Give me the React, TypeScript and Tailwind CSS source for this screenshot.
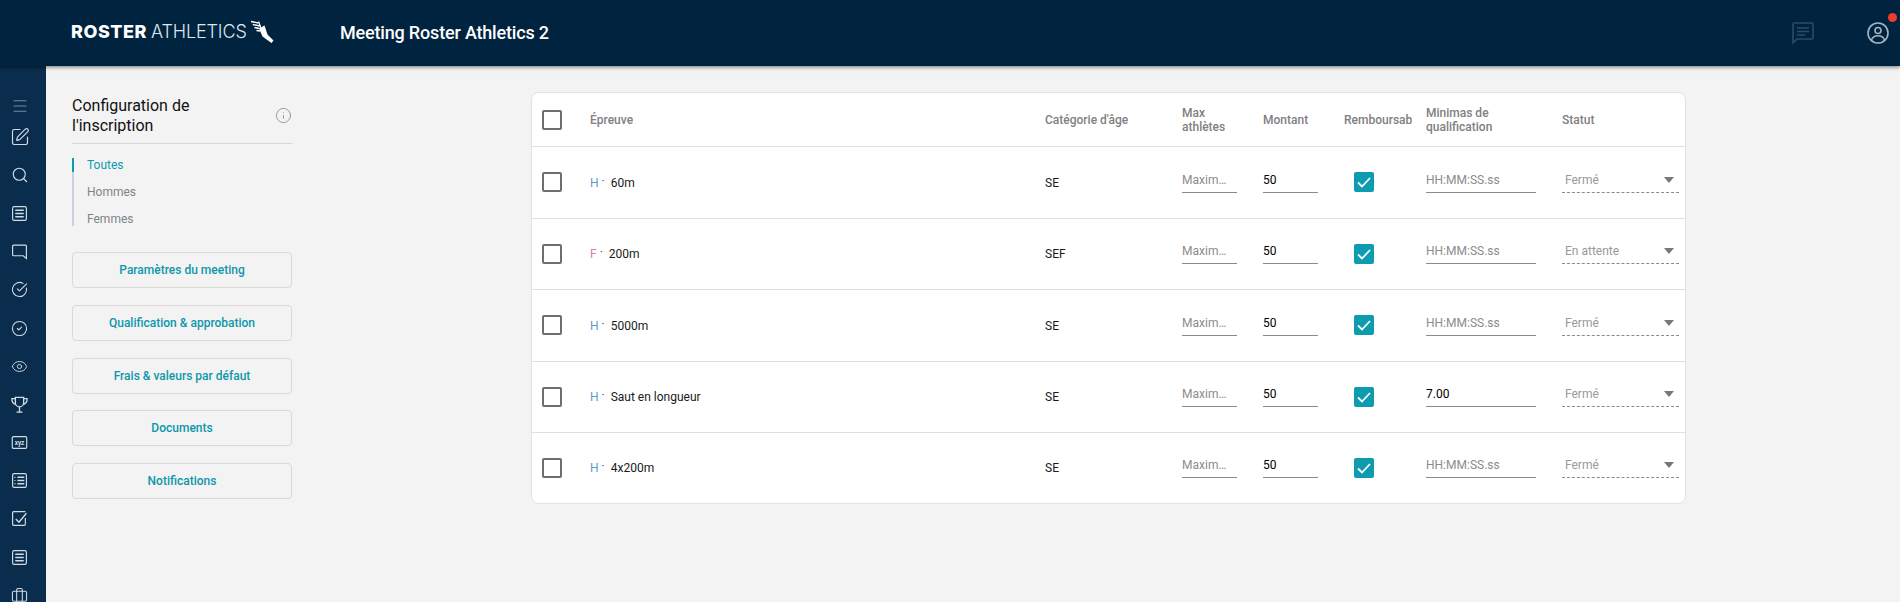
import React from "react";
import { Menu, SquarePen, Search, CircleCheckBig, CircleCheck, Eye, Briefcase, Info } from "lucide-react";

const C = "w-[17px] h-[17px]";

function SvgIcon({ children, big }: { children: React.ReactNode; big?: boolean }) {
  return (
    <svg viewBox="0 0 16 16" fill="none" stroke="currentColor" strokeWidth="1.1" className={big ? "w-[19px] h-[19px] ml-[-1px]" : C}>
      {children}
    </svg>
  );
}

const ListBox = () => (
  <SvgIcon>
    <rect x="1.5" y="1.5" width="13" height="13" rx="1.5" />
    <path d="M4 5h8M4 8h8M4 11h8" strokeWidth="1.3" />
  </SvgIcon>
);
const Chat = () => (
  <SvgIcon>
    <path d="M1.5 3a1 1 0 0 1 1-1h11a1 1 0 0 1 1 1v11.5l-3-2.5h-9a1 1 0 0 1-1-1z" />
  </SvgIcon>
);
const TrophyI = () => (
  <SvgIcon big>
    <path d="M4.5 2h7v4.5a3.5 3.5 0 0 1-7 0z" />
    <path d="M4.5 3H1.6c-.2 2.4 1 4.4 3.4 5M11.5 3h2.9c.2 2.4-1 4.4-3.4 5M8 10v4M5.5 14.5h5" />
  </SvgIcon>
);
const Xyz = () => (
  <svg viewBox="0 0 16 16" fill="none" className={C}>
    <rect x="1.2" y="2.5" width="13.6" height="11" rx="1.2" stroke="currentColor" strokeWidth="1.1" />
    <text x="8" y="10.2" textAnchor="middle" fontSize="6" fontWeight="700" fontFamily="Roboto, sans-serif" fill="currentColor">xyz</text>
  </svg>
);
const ListBullet = () => (
  <SvgIcon>
    <rect x="1.5" y="1.5" width="13" height="13" rx="1.5" />
    <path d="M6 5h6.5M6 8h6.5M6 11h6.5" strokeWidth="1.3" />
    <path d="M3.2 5h1M3.2 8h1M3.2 11h1" strokeWidth="1.1" />
  </SvgIcon>
);
const CheckBoxI = () => (
  <SvgIcon>
    <path d="M13.5 7.5v6a1 1 0 0 1-1 1h-10a1 1 0 0 1-1-1v-11a1 1 0 0 1 1-1h11" />
    <path d="M4.5 8.5l3 3 7-8.5" strokeWidth="1.3" />
  </SvgIcon>
);

const side: React.ReactNode[] = [
  <SquarePen className="w-[20px] h-[20px] ml-[-1px]" strokeWidth={1.4} />,
  <Search className="w-[18px] h-[18px]" strokeWidth={1.5} />,
  <ListBox />,
  <Chat />,
  <CircleCheckBig className={C} strokeWidth={1.5} />,
  <CircleCheck className={C} strokeWidth={1.5} />,
  <Eye className={C} strokeWidth={1.3} />,
  <TrophyI />,
  <Xyz />,
  <ListBullet />,
  <CheckBoxI />,
  <ListBox />,
  <Briefcase className={C} strokeWidth={1.5} />,
];

const cols = "grid grid-cols-[58px_455px_137px_81px_81px_82px_136px_117px] items-center";

const rows = [
  { g: "H", n: "60m", c: "SE", m: "", s: "Fermé", h: "h-[72px]" },
  { g: "F", n: "200m", c: "SEF", m: "", s: "En attente", h: "h-[71px]" },
  { g: "H", n: "5000m", c: "SE", m: "", s: "Fermé", h: "h-[72px]" },
  { g: "H", n: "Saut en longueur", c: "SE", m: "7.00", s: "Fermé", h: "h-[71px]" },
  { g: "H", n: "4x200m", c: "SE", m: "", s: "Fermé", h: "h-[70px]" },
];

const Box = () => <div className="w-[20px] h-[20px] border-2 border-[#6e6e6e] rounded-[2px] ml-[10px]" />;

const Field = ({ value, placeholder, w }: { value?: string; placeholder?: string; w: string }) => (
  <div className={`${w} h-[25px] mb-[5px] border-b border-[#8a8a8a] flex items-center text-[12px] overflow-hidden whitespace-nowrap`}>
    {value ? <span className="text-black">{value}</span> : <span className="text-[#8c8c8c]">{placeholder}</span>}
  </div>
);

export default function App() {
  return (
    <div className="w-[1900px] h-[602px] overflow-hidden bg-[#f3f3f3] font-['Roboto',sans-serif] flex flex-col">
      <header className="relative z-10 h-[66px] shrink-0 bg-[#00233f] shadow-[0_1px_4px_rgba(0,0,0,0.55)] flex items-center">
        <div className="ml-[71px] w-[269px] flex items-center text-white font-['Inter',sans-serif] text-[18px] leading-none mt-[-2px]">
          <span className="font-extrabold tracking-[0.55px]">ROSTER</span>
          <span className="font-light ml-[4px] text-[#dfe7ee] tracking-[-0.15px]">ATHLETICS</span>
          <svg viewBox="0 0 24 24" className="w-[24px] h-[24px] ml-[3px] mt-[-1px]" fill="none" stroke="white">
            <path d="M9 8.5L14.5 5.5L17.5 14.5L23.5 20.5L21.5 23L12.5 16.5z" fill="white" stroke="none" />
            <path d="M1 1.5l7.5 1.5M2.8 4.5l7.5 1.5M4.5 7.5l5 1M6.5 10.5l3.5.5" strokeWidth="1.4" />
            <path d="M8.5 1.5L11 8" strokeWidth="1.2" />
          </svg>
        </div>
        <div className="text-white text-[18px] font-medium tracking-[-0.18px] mt-[-2px]">Meeting Roster Athletics 2</div>
        <div className="ml-auto mr-[11px] flex items-center gap-[53px]">
          <svg viewBox="0 0 22 22" className="w-[22px] h-[22px] text-[#2b4b66]" fill="none" stroke="currentColor" strokeWidth="1.6">
            <path d="M1 2.2a1.2 1.2 0 0 1 1.2-1.2h17.6a1.2 1.2 0 0 1 1.2 1.2v13.6a1.2 1.2 0 0 1-1.2 1.2H5l-4 4z" />
            <path d="M5 6h12M5 9.5h12M5 13h8" />
          </svg>
          <div className="relative w-[22px] h-[22px]">
            <svg viewBox="0 0 22 22" className="w-[22px] h-[22px] text-[#a3b4c2]" fill="none" stroke="currentColor" strokeWidth="1.6">
              <circle cx="11" cy="11" r="10" />
              <circle cx="11" cy="8.5" r="3" />
              <path d="M4.5 18c1-3 3.5-4.2 6.5-4.2s5.5 1.2 6.5 4.2" />
            </svg>
            <span className="absolute top-[-9px] right-[-8px] w-[9px] h-[9px] rounded-full bg-[#f03a30]" />
          </div>
        </div>
      </header>

      <div className="flex flex-1 min-h-0">
        <nav className="w-[46px] shrink-0 bg-[#0a2c4d] text-[#d0dbe4] overflow-hidden pt-[28px] pl-[11px]">
          <div className="h-[24px] flex items-center">
            <Menu className="w-[18px] h-[18px] text-[#7a90a3]" strokeWidth={1.3} />
          </div>
          {side.map((ic, i) => (
            <div key={i} className="h-[38.2px] flex items-center">
              {ic}
            </div>
          ))}
        </nav>

        <aside className="w-[220px] ml-[26px] shrink-0 pt-[29px]">
          <div className="flex items-center justify-between border-b border-[#d6d6d6] pb-[7px] h-[49px]">
            <div className="text-[16px] leading-[20px] text-[#111] w-[160px]">Configuration de l'inscription</div>
            <Info className="w-[17px] h-[17px] text-[#8a8a8a]" strokeWidth={1.2} />
          </div>
          <div className="relative mt-[14px] border-l-2 border-[#cdd0dc] pl-[13px] text-[12px] text-[#808488]">
            <span className="absolute left-[-2px] top-0 w-[2px] h-[14px] bg-[#0d9bb0]" />
            <div className="h-[27px] leading-[14px] text-[#0d9bb0]">Toutes</div>
            <div className="h-[27px] leading-[14px]">Hommes</div>
            <div className="h-[14px] leading-[14px]">Femmes</div>
          </div>
          <div className="mt-[26px] flex flex-col gap-[16.75px]">
            {["Paramètres du meeting", "Qualification & approbation", "Frais & valeurs par défaut", "Documents", "Notifications"].map((t) => (
              <div key={t} className="h-[36px] border border-[#d9d9d9] rounded-[4px] flex items-center justify-center text-[12px] font-medium text-[#0d97ab]">
                {t}
              </div>
            ))}
          </div>
        </aside>

        <main className="ml-[239px] mt-[26px] w-[1155px] h-[412px] bg-white border border-[#e3e3e3] rounded-[8px] text-[12px] overflow-hidden self-start">
          <div className={`${cols} h-[54px] border-b border-[#e0e0e0] font-medium text-[#808080] leading-[14px]`}>
            <Box />
            <div>Épreuve</div>
            <div>Catégorie d'âge</div>
            <div>Max<br />athlètes</div>
            <div>Montant</div>
            <div className="w-[68px] overflow-hidden whitespace-nowrap">Remboursable</div>
            <div>Minimas de<br />qualification</div>
            <div>Statut</div>
          </div>
          {rows.map((r, i) => (
            <div key={i} className={`${cols} ${r.h} ${i < rows.length - 1 ? "border-b border-[#e0e0e0]" : ""}`}>
              <div className="mb-[1px]">
                <Box />
              </div>
              <div className="flex items-center text-[#1a1a1a]">
                <span className={r.g === "H" ? "text-[#5b9bc9]" : "text-[#d77fb0]"}>{r.g}</span>
                <span className="ml-[3px] mr-[6px] relative top-[-2px] text-[#555]">·</span>
                <span>{r.n}</span>
              </div>
              <div className="text-[#1a1a1a]">{r.c}</div>
              <Field placeholder="Maxim…" w="w-[55px]" />
              <Field value="50" w="w-[55px]" />
              <div className="pl-[10px] mb-[1px]">
                <div className="w-[20px] h-[20px] rounded-[2px] bg-[#0d9bb0] flex items-center justify-center">
                  <svg viewBox="0 0 20 20" className="w-[20px] h-[20px]" fill="none" stroke="white" strokeWidth="1.8">
                    <path d="M4 10.5l4 4 8-8.5" />
                  </svg>
                </div>
              </div>
              <Field value={r.m} placeholder="HH:MM:SS.ss" w="w-[110px]" />
              <div className="w-[117px] h-[25px] mb-[5px] border-b border-dashed border-[#8a8a8a] flex items-center justify-between pl-[3px] pr-[5px] text-[#999]">
                <span>{r.s}</span>
                <span className="w-0 h-0 border-l-[5.5px] border-r-[5.5px] border-t-[6px] border-l-transparent border-r-transparent border-t-[#777]" />
              </div>
            </div>
          ))}
        </main>
      </div>
    </div>
  );
}
